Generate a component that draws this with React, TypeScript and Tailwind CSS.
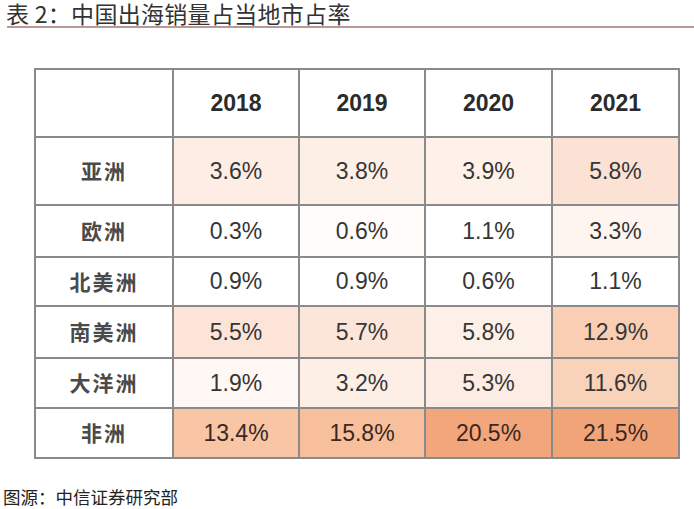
import React from "react";

const years = ["2018", "2019", "2020", "2021"];

const rows: { name: string; h: string; cells: [string, string][] }[] = [
  { name: "亚洲", h: "h-[68px]", cells: [["3.6%", "bg-[#fdede4]"], ["3.8%", "bg-[#fdeee6]"], ["3.9%", "bg-[#fdf1ea]"], ["5.8%", "bg-[#fbe2d4]"]] },
  { name: "欧洲", h: "h-[52px]", cells: [["0.3%", "bg-white"], ["0.6%", "bg-[#fffcfa]"], ["1.1%", "bg-white"], ["3.3%", "bg-[#fef5f0]"]] },
  { name: "北美洲", h: "h-[49px]", cells: [["0.9%", "bg-white"], ["0.9%", "bg-white"], ["0.6%", "bg-white"], ["1.1%", "bg-white"]] },
  { name: "南美洲", h: "h-[52px]", cells: [["5.5%", "bg-[#fce5d8]"], ["5.7%", "bg-[#fce6da]"], ["5.8%", "bg-[#fdf0e9]"], ["12.9%", "bg-[#f9ceb2]"]] },
  { name: "大洋洲", h: "h-[50px]", cells: [["1.9%", "bg-[#fef7f3]"], ["3.2%", "bg-[#fdeee6]"], ["5.3%", "bg-[#fcece3]"], ["11.6%", "bg-[#f9d2ba]"]] },
  { name: "非洲", h: "h-[50px]", cells: [["13.4%", "bg-[#f8c5a5]"], ["15.8%", "bg-[#f7bf9b]"], ["20.5%", "bg-[#f3a67c]"], ["21.5%", "bg-[#f2a479]"]] },
];

export default function App() {
  return (
    <div className="w-[694px] h-[509px] bg-white relative overflow-hidden font-['Liberation_Sans','Noto_Sans_CJK_SC',sans-serif]">
      <div className="pl-[6px]">
        <div className="text-[23px] leading-[26px] text-[#333] font-['Noto_Sans_CJK_SC',sans-serif] tracking-[0.3px]">
          表 2：中国出海销量占当地市占率
        </div>
      </div>
      <div className="ml-[7px] h-[2px] bg-[#b59a96]" />

      <table className="mt-[40px] ml-[34px] border-collapse border-2 border-[#9a9a9a] text-center">
        <tbody>
          <tr className="h-[68px]">
            <td className="w-[138px] border-2 border-[#8a8a8a] bg-white" />
            {years.map((y, i) => (
              <td
                key={y}
                className={`${i < 2 ? "w-[126px]" : "w-[127px]"} border-2 border-[#8a8a8a] bg-white text-[23px] font-bold text-[#2b2b2b]`}
              >
                {y}
              </td>
            ))}
          </tr>
          {rows.map((r, ri) => (
            <tr key={r.name} className={r.h}>
              <td className="border-2 border-[#8a8a8a] bg-white text-[21px] font-bold text-[#4a4a4a] font-['Noto_Sans_CJK_SC',sans-serif] tracking-[2px]">
                {r.name}
              </td>
              {r.cells.map(([v, bg]) => (
                <td
                  key={v + bg}
                  className={`border-2 border-[#8a8a8a] ${bg} text-[23px] ${ri === 5 ? "text-[#3a2822]" : "text-[#363636]"}`}
                >
                  {v}
                </td>
              ))}
            </tr>
          ))}
        </tbody>
      </table>

      <div className="mt-[28px] pl-[3px] text-[17.5px] leading-[20px] text-[#222] font-['Noto_Sans_CJK_SC',sans-serif]">
        图源：中信证券研究部
      </div>
    </div>
  );
}
